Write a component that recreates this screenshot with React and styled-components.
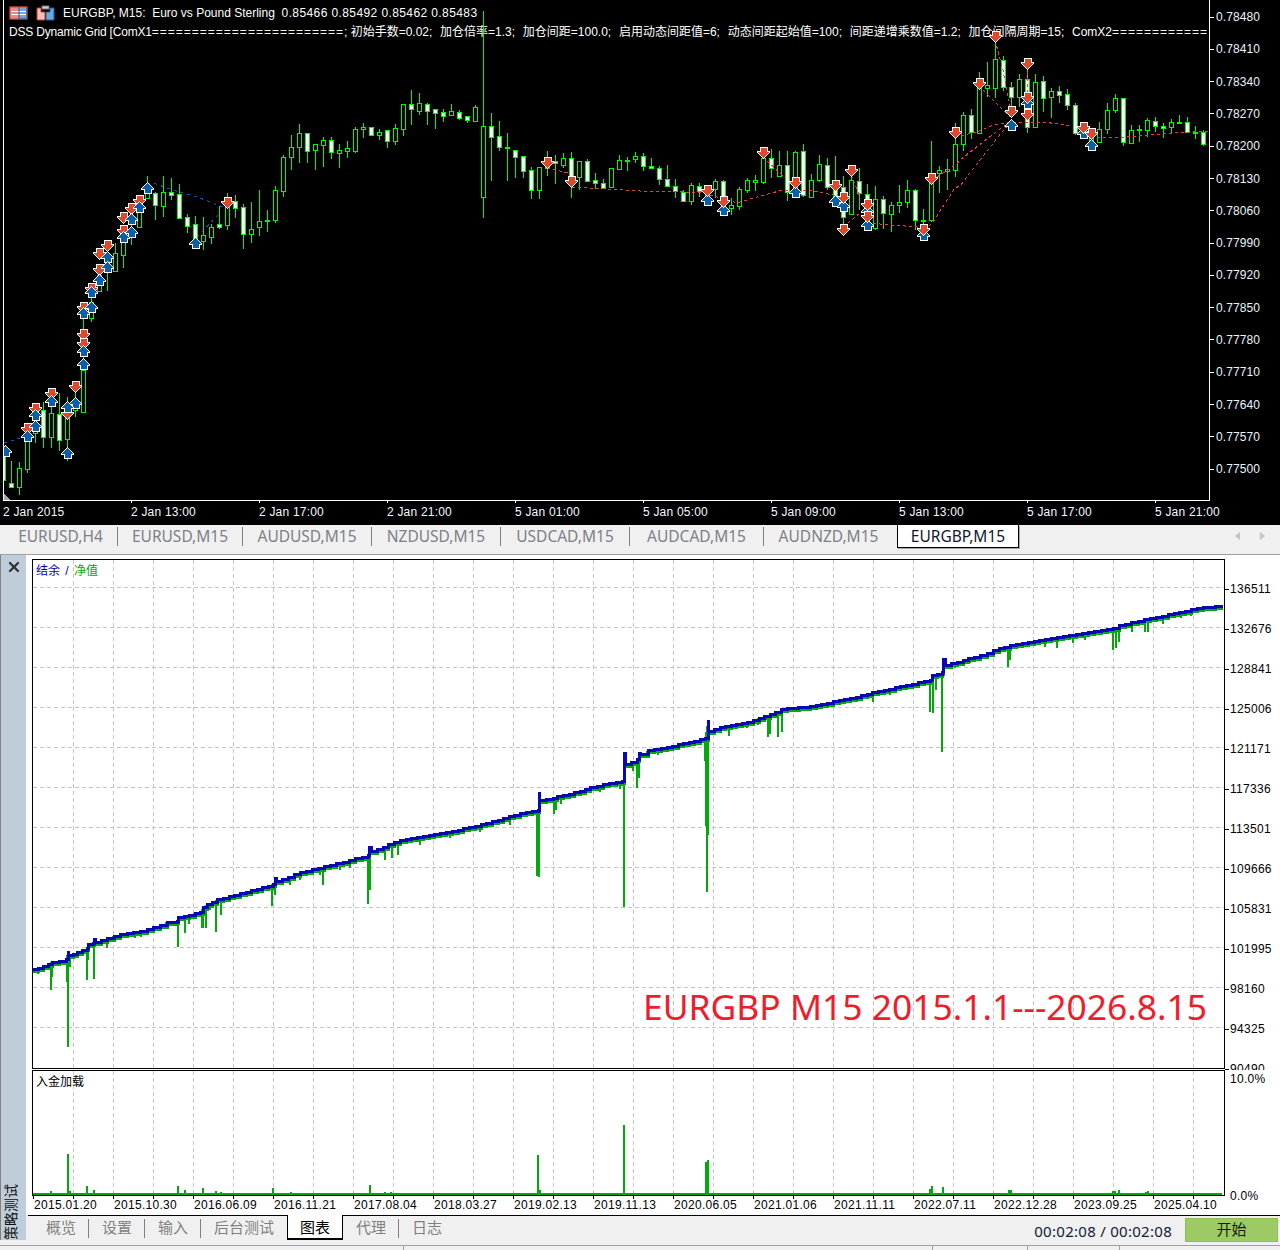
import React from "react";
import styled, { createGlobalStyle } from "styled-components";
import { X } from "lucide-react";

const Global = createGlobalStyle`
  html, body { margin: 0; padding: 0; background: #f0f0f0; overflow: hidden; }
  #root { width: 1280px; height: 1250px; overflow: hidden; }
  * { box-sizing: border-box; }
`;

const MONO = `"Liberation Sans", "Noto Sans CJK SC", sans-serif`;
const UI = `"Noto Sans", "Noto Sans CJK SC", sans-serif`;

/* ---------- layout ---------- */
const Page = styled.div`
  width: 1280px;
  height: 1250px;
  display: flex;
  flex-direction: column;
  overflow: hidden;
  background: #f0f0f0;
`;
const MarketChart = styled.section`
  flex: none;
  height: 525px;
  background: #000;
  color: #fff;
  font: 12px/14px ${MONO};
  display: grid;
  grid-template-columns: 1210px 70px;
  grid-template-rows: 501px 24px;
`;
const PlotFrame = styled.div`
  position: relative;
  margin-left: 3px;
  border: 1px solid #fff;
  border-top: none;
  overflow: hidden;
  & > svg { position: relative; z-index: 1; display: block; }
`;
const Legend = styled.div`
  position: absolute;
  left: 5px;
  top: 5px;
  white-space: pre;
`;
const LegendTitle = styled.div`
  display: flex;
  align-items: center;
  height: 16px;
  gap: 8px;
`;
const Quote = styled.span`
  letter-spacing: 0.4px;
`;
const LegendParams = styled.div`
  margin-top: 4px;
  height: 14px;
`;
const StrategyName = styled.span`
  letter-spacing: -0.2px;
`;
const EqRun = styled.span`
  letter-spacing: 1px;
`;
const ParamList = styled.span`
  word-spacing: 4.4px;
`;
const PriceAxis = styled.div`
  display: flex;
  flex-direction: column;
  padding-top: 1px;
  overflow: hidden;
`;
const PriceLabel = styled.div`
  flex: none;
  height: 32.29px;
  display: flex;
  align-items: center;
  gap: 2px;
  color: #e8f4ff;
  letter-spacing: 0.1px;
  &::before { content: ""; width: 4px; height: 1px; background: #fff; }
`;
const TimeAxis = styled.div`
  grid-column: 1 / 3;
  display: flex;
  padding-left: 3px;
`;
const TimeLabel = styled.div`
  flex: none;
  width: 128px;
  white-space: nowrap;
  padding-top: 4px;
  position: relative;
  color: #f4f8ff;
  letter-spacing: 0.2px;
  &::before {
    content: "";
    position: absolute;
    left: 0;
    top: -1px;
    width: 1px;
    height: 3px;
    background: ${(p) => (p.$first ? "transparent" : "#fff")};
  }
`;

/* ---------- symbol tabs ---------- */
const SymbolBar = styled.nav`
  flex: none;
  height: 30px;
  display: flex;
  align-items: flex-start;
  padding-left: 4px;
  background: #f0f0f0;
  border-bottom: 1px solid #a0a0a0;
  font: 15.5px/23px ${UI};
`;
const SymbolTab = styled.div`
  flex: none;
  width: ${(p) => p.$w}px;
  height: 23px;
  text-align: center;
  color: ${(p) => (p.$active ? "#101830" : "#7c8088")};
  ${(p) =>
    p.$active &&
    `background:#fff;border:1px solid #000;border-top:none;box-shadow:1px 1px 0 #a8a8a8;margin-left:4px;`}
`;
const TabDivider = styled.i`
  flex: none;
  width: 1px;
  height: ${(p) => p.$h}px;
  margin-top: ${(p) => p.$top}px;
  background: #808080;
`;
const ScrollArrows = styled.div`
  margin-left: auto;
  display: flex;
  gap: 20px;
  padding: 7px 15px 0 0;
`;
const ScrollArrow = styled.i`
  width: 0;
  height: 0;
  border-top: 4px solid transparent;
  border-bottom: 4px solid transparent;
  ${(p) => (p.$dir === "left" ? "border-right: 5px solid #c4c4c4;" : "border-left: 5px solid #c4c4c4;")}
`;

/* ---------- tester ---------- */
const Tester = styled.section`
  flex: none;
  height: 690px;
  display: grid;
  grid-template-columns: 26px 1fr;
`;
const SideStrip = styled.aside`
  height: 685px;
  background: #bfcddb;
  border-left: 1px solid #808080;
  display: flex;
  flex-direction: column;
  align-items: center;
  justify-content: space-between;
  padding: 4px 0 0 0;
  overflow: hidden;
`;
const CloseButton = styled.div`
  display: flex;
  color: #333;
  & svg { display: block; }
`;
const SideTitle = styled.div`
  writing-mode: vertical-rl;
  text-orientation: sideways;
  transform: rotate(180deg);
  font: 14px/16px ${MONO};
  color: #111;
  margin: 0 6px 0 0;
`;
const TesterMain = styled.div`
  display: flex;
  flex-direction: column;
  min-width: 0;
`;
const ChartsArea = styled.div`
  flex: none;
  height: 660px;
  background: #fff;
  color: #000;
  font: 12px/14px ${MONO};
  display: flex;
  flex-direction: column;
`;
const EquityRow = styled.div`
  flex: none;
  height: 515px;
  padding: 4px 0 0 6px;
  display: flex;
  overflow: hidden;
`;
const PlotBox = styled.div`
  position: relative;
  flex: none;
  width: 1193px;
  height: ${(p) => p.$h}px;
  border: 1px solid #000;
  ${(p) => p.$open && "border-bottom: none;"}
  & > svg { display: block; }
`;
const PaneTitle = styled.div`
  position: absolute;
  left: 3px;
  top: 4px;
  z-index: 1;
  word-spacing: 2px;
`;
const BalanceWord = styled.span`
  color: #0000c8;
`;
const EquityWord = styled.span`
  color: #00a800;
`;
const Annotation = styled.div`
  position: absolute;
  right: 17px;
  top: 422px;
  font: 35.4px/48px ${UI};
  color: #f01c2c;
  white-space: nowrap;
`;
const ValueAxis = styled.div`
  flex: 1;
  display: flex;
  flex-direction: column;
  padding-top: ${(p) => p.$pad || 0}px;
`;
const ValueLabel = styled.div`
  flex: none;
  height: 40px;
  display: flex;
  align-items: center;
  gap: 1px;
  letter-spacing: 0.3px;
  &::before { content: ""; width: 4px; height: 1px; background: #000; }
`;
const LoadRow = styled.div`
  flex: none;
  height: 125px;
  padding-left: 6px;
  display: flex;
`;
const LoadAxis = styled.div`
  flex: 1;
  display: flex;
  flex-direction: column;
  justify-content: space-between;
  padding: 2px 0 0 5px;
  margin-bottom: -8px;
  letter-spacing: 0.3px;
`;
const DateAxis = styled.div`
  flex: 1;
  display: flex;
  padding: 3px 0 0 8px;
  letter-spacing: 0.3px;
  background: repeating-linear-gradient(90deg, #000 0 1px, transparent 1px 40px) 7px 0 / 1192px 4px no-repeat;
`;
const DateLabel = styled.div`
  flex: none;
  width: 80px;
`;
const BottomBar = styled.div`
  flex: none;
  height: 30px;
  margin-left: 2px;
  border-top: 1px solid #000;
  display: flex;
  align-items: flex-start;
  padding-left: 5px;
  font: 15px/22px ${UI};
`;
const ViewTab = styled.div`
  flex: none;
  height: 24px;
  padding: ${(p) => (p.$active ? "0 12px" : "0 12px 0 13px")};
  color: ${(p) => (p.$active ? "#000" : "#808080")};
  ${(p) =>
    p.$active &&
    `background:#fff;border:1px solid #000;border-top:none;border-bottom-width:2px;margin:-1px 0 0 1px;height:25px;padding-top:1px;`}
`;
const Elapsed = styled.div`
  margin-left: auto;
  padding-top: 4px;
  color: #102040;
  white-space: nowrap;
  letter-spacing: 0.28px;
`;
const StartButton = styled.button`
  flex: none;
  width: 93px;
  height: 24px;
  margin: 2px 2px 0 13px;
  padding: 0 0 2px 0;
  background: #9ccb66;
  border: 1px solid #8dbe57;
  color: #1a1a10;
  font: 15px/20px ${UI};
`;
const Footer = styled.footer`
  flex: none;
  height: 5px;
  border-top: 1px solid #a0a0a0;
  display: grid;
  grid-template-columns: 404px 529px 95px 92px 1fr;
`;
const FooterCell = styled.div`
  border-right: 1px solid ${(p) => (p.$last ? "transparent" : "#a0a0a0")};
`;

/* ---------- market data: [high, low, bodyTop, bodyBottom, white] ---------- */
const CANDLES = [
  [440,480,449,480,1],[461,488,483,487,1],[462,495,468,487,0],[430,473,437,469,0],[420,443,428,433,0],
  [402,448,410,437,1],[400,448,413,437,0],[393,451,414,440,1],[397,461,413,439,0],[388,417,407,410,0],
  [302,412,370,412,0],[295,322,302,318,0],[264,291,275,291,0],[255,291,262,270,0],[243,272,253,271,0],
  [235,268,242,255,0],[224,245,228,236,0],[205,228,212,227,0],[176,198,192,198,0],[192,220,193,205,1],
  [176,217,192,206,0],[178,200,192,195,1],[184,218,194,218,1],[214,233,217,226,1],[216,241,224,239,1],
  [217,250,235,241,0],[224,244,227,237,0],[206,229,224,227,1],[193,230,207,225,0],[195,218,201,208,1],
  [204,249,207,234,1],[202,243,229,234,0],[190,236,221,227,0],[210,232,220,221,0],[186,223,190,220,0],
  [155,197,157,191,0],[135,170,147,157,0],[124,163,133,147,0],[133,163,133,151,1],[144,170,144,150,0],
  [137,167,140,145,0],[137,159,140,152,1],[144,168,150,153,0],[141,158,148,151,0],[127,153,129,151,0],
  [123,138,127,129,0],[127,135,127,135,1],[129,140,132,135,0],[130,148,130,141,1],[124,145,128,141,0],
  [104,136,104,129,0],[90,125,104,109,1],[93,115,103,111,0],[103,125,104,111,1],[109,129,109,113,1],
  [109,122,112,116,1],[104,116,111,115,0],[110,120,112,118,1],[116,123,116,120,1],[105,122,107,121,0],
  [11,218,126,197,0],[113,181,126,137,1],[121,151,136,147,1],[133,181,147,148,0],[150,178,150,157,1],
  [156,178,156,171,1],[167,199,170,190,1],[167,199,167,190,0],[151,176,160,168,0],[155,184,161,163,1],
  [153,168,158,165,0],[152,198,158,177,1],[161,190,161,177,0],[159,182,161,181,1],[173,189,180,183,1],
  [179,189,183,188,1],[168,188,168,187,0],[155,170,160,169,0],[157,171,160,161,0],[152,163,156,159,0],
  [153,171,156,166,1],[158,168,166,168,1],[166,185,168,179,1],[165,187,179,186,1],[179,198,186,191,1],
  [190,202,192,201,1],[183,205,185,201,0],[183,197,186,191,1],[185,203,188,196,1],[179,198,181,189,0],
  [180,213,181,198,1],[198,215,205,208,0],[187,210,189,206,0],[178,193,180,190,0],[175,191,180,182,0],
  [148,184,158,182,0],[149,178,158,168,1],[151,177,165,176,0],[151,201,165,192,1],[151,197,152,192,0],
  [144,197,151,195,1],[174,198,180,197,0],[155,182,164,180,0],[158,190,165,187,1],[156,200,184,198,1],
  [176,227,187,217,1],[168,215,180,214,0],[168,210,181,193,1],[184,230,194,207,1],[186,230,199,228,0],
  [196,229,199,213,1],[202,232,205,214,0],[185,213,202,205,0],[180,208,190,202,0],[189,230,190,220,1],
  [209,233,220,221,0],[141,222,173,220,0],[166,193,170,173,0],[159,190,169,171,0],[123,177,144,170,0],
  [112,151,115,144,0],[109,139,115,132,1],[72,134,87,133,0],[62,97,85,88,0],[37,98,59,88,0],
  [56,91,60,87,1],[82,117,87,97,1],[74,107,79,97,0],[68,133,79,127,1],[74,127,82,127,0],
  [76,112,81,98,1],[88,118,91,97,0],[86,103,91,95,1],[89,110,94,105,1],[103,135,105,133,1],
  [125,137,128,134,1],[128,150,138,143,0],[122,143,129,142,0],[103,134,110,129,0],[94,113,98,110,0],
  [98,146,98,142,1],[125,144,130,143,0],[125,142,129,130,0],[118,137,120,130,0],[117,132,121,126,1],
  [123,138,126,128,1],[119,133,122,127,0],[115,123,122,123,1],[117,133,122,132,1],[126,139,132,133,0],
  [130,146,132,144,1],
];
const SELLS = [
  [227,202],[139,200],[131,208],[123,217],[123,230],[107,245],[99,253],[99,269],[91,288],[83,307],[83,334],[83,343],
  [75,386],[51,393],[35,408],[27,428],[67,413],
  [547,162],[571,181],[707,190],[723,201],[763,152],[795,182],[835,185],[843,197],[851,170],[867,204],[867,216],
  [843,229],[923,229],[931,178],[955,132],[979,83],[995,36],[1011,111],[1027,63],[1027,97],[1027,114],[1083,127],[1091,133],
];
const BUYS = [
  [147,188],[139,207],[131,219],[131,232],[123,237],[107,257],[195,243],[107,267],[99,280],[91,292],[91,307],[83,313],
  [83,351],[83,364],[75,403],[67,407],[51,401],[35,415],[35,426],[27,436],[67,453],[5,451],
  [707,200],[723,210],[795,192],[835,201],[843,206],[867,211],[867,225],[923,235],[1011,125],[1027,103],[1083,133],[1091,145],
];
const RED_TRAILS = [
  "547,168 568,173", "572,187 640,191 683,192 703,193 737,203 757,197 783,190 807,190 833,195 842,199",
  "763,157 783,176", "851,175 860,197", "843,227 860,213", "867,223 917,227 923,232 933,222 955,188 960,186 980,160 1002,132 1010,123",
  "931,178 937,177 957,164 960,160 992,135 1010,122", "955,137 977,132 993,125 1010,122 1043,122 1073,126",
  "979,86 993,100 1010,117", "995,40 1003,70 1010,110", "1027,66 1027,112", "1097,138 1127,137 1173,133 1209,131",
];
const BLUE_TRAILS = ["147,183 153,183 173,190 200,198 223,207", "197,237 220,213", "4,443 20,438"];

/* pixel rows of a trade arrow, from its flat end to its point */
const OUTLINE_ROWS = [8, 8, 8, 8, 13, 13, 11, 9, 7, 5, 3, 1];
const FILL_ROWS = [0, 6, 6, 6, 6, 11, 9, 7, 5, 3, 1, 0];
const rowsPath = (rows, up) =>
  rows
    .map((w, i) => (w ? `M${-Math.floor((w - 1) / 2)} ${up ? 5 - i : i - 5}h${w}v1h${-w}z` : ""))
    .join("");

const Candle = ({ k, d }) => {
  const x = 3 + 8 * k;
  const [hi, lo, top, bot, white] = d;
  const h = Math.max(bot - top, 1);
  return (
    <g>
      <rect x={x} y={hi} width="1" height={lo - hi} fill="#00f800" />
      <rect x={x - 1.5} y={top + 0.5} width="4" height={h} fill={white ? "#fff" : "#000"} stroke="#00f800" />
    </g>
  );
};
const Arrow = ({ p, up, fill }) => (
  <g transform={`translate(${p[0]} ${p[1]})`}>
    <path d={rowsPath(OUTLINE_ROWS, up)} fill="#fff" />
    <path d={rowsPath(FILL_ROWS, up)} fill={fill} />
  </g>
);

const MarketPlot = () => (
  <svg width="1205" height="500" viewBox="4 0 1205 500" shapeRendering="crispEdges">
    {BLUE_TRAILS.map((pts) => (
      <polyline key={pts} points={pts} fill="none" stroke="#0f5aa8" strokeDasharray="3 4" />
    ))}
    {CANDLES.map((d, k) => (
      <Candle key={k} k={k} d={d} />
    ))}
    {RED_TRAILS.map((pts) => (
      <polyline key={pts} points={pts} fill="none" stroke="#e8432a" strokeDasharray="3 3" />
    ))}
    {BUYS.filter((p) => p[0] >= 300).map((p) => (
      <Arrow key={p.join()} p={p} up fill="#0a5fa8" />
    ))}
    {SELLS.map((p) => (
      <Arrow key={p.join()} p={p} fill="#e0482a" />
    ))}
    {BUYS.filter((p) => p[0] < 300).map((p) => (
      <Arrow key={p.join()} p={p} up fill="#0a5fa8" />
    ))}
    <polygon points="4,494 10,500 4,500" fill="#a0a8b4" />
  </svg>
);

const TableIcon = () => (
  <svg width="19" height="14" viewBox="0 0 19 14">
    <rect x="1" y="1" width="17" height="12" fill="#fff" stroke="#c63a30" strokeWidth="1.5" />
    <rect x="2" y="2" width="8" height="10" fill="#ee8a80" />
    <rect x="10" y="2" width="7" height="10" fill="#6ca8dc" />
    <path d="M2 5.5h15M2 8.5h15" stroke="#fff" />
    <path d="M10 1v12M18 1v12M10 13h8" stroke="#1a5f9f" />
  </svg>
);
const ChartIcon = () => (
  <svg width="19" height="16" viewBox="0 0 19 16">
    <path d="M1 3h4v4h4v8H1z" fill="#f4c0b8" stroke="#c63a30" />
    <path d="M18 3h-4v4h-4v8h8z" fill="#6ca8dc" stroke="#1a5f9f" />
    <rect x="6" y="1" width="7" height="3" fill="#d0d0d0" stroke="#777" />
  </svg>
);

/* ---------- equity data ---------- */
const BALANCE = [
  [33,969],[43,966],[52,962],[66,959],[68,951],[68,955],[77,952],[87,948],[88,944],[93,943],[94,939],[95,942],[107,938],[120,934],
  [140,931],[160,925],[167,922],[177,921],[178,917],[200,912],[203,907],[207,904],[217,899],[240,893],[273,884],[275,878],[276,881],
  [300,872],[330,865],[368,855],[369,847],[371,851],[400,840],[440,833],[475,826],[520,813],[538,810],[539,792],[539,800],[553,798],
  [557,796],[580,791],[590,787],[603,784],[622,781],[624,753],[625,764],[637,759],[639,753],[640,754],[648,750],[667,747],[683,743],
  [705,738],[708,720],[708,731],[720,727],[747,722],[753,720],[775,712],[781,709],[810,706],[850,698],[878,691],[900,686],[930,680],
  [932,675],[942,672],[943,659],[945,665],[980,655],[993,650],[1010,645],[1057,637],[1113,628],[1119,625],[1150,618],[1197,608],[1221,605],
];
const DRAWDOWNS = [
  [38,974],[51,990],[52,977],[67,982],[68,1047],[70,967],[77,956],[87,980],[88,960],[94,979],[98,945],[107,948],[113,940],[118,938],
  [128,937],[135,938],[141,937],[147,935],[163,929],[166,928],[178,947],[185,933],[189,924],[194,917],[202,928],[203,928],[206,928],
  [210,910],[216,932],[221,915],[240,897],[272,906],[275,895],[290,885],[300,880],[320,875],[323,885],[340,870],[350,868],[368,904],
  [370,890],[385,860],[392,858],[398,855],[420,845],[450,838],[480,832],[510,825],[537,876],[539,877],[554,814],[556,810],[561,804],
  [583,793],[600,792],[620,789],[624,907],[627,767],[633,771],[637,788],[639,778],[647,755],[658,755],[666,750],[674,749],[679,749],
  [688,747],[705,761],[706,826],[707,892],[708,835],[729,736],[747,728],[758,725],[768,737],[770,734],[778,737],[782,732],[800,712],
  [820,708],[838,705],[850,703],[873,702],[890,695],[930,712],[933,713],[936,690],[942,752],[955,668],[970,663],[1008,667],[1010,660],
  [1045,647],[1057,648],[1073,643],[1085,640],[1113,650],[1116,648],[1119,642],[1132,632],[1145,632],[1148,632],[1163,624],[1181,618],[1191,616],[1205,610],
];
const LOADS = [
  [38,1193],[51,1191],[68,1154],[70,1191],[87,1186],[94,1190],[107,1193],[141,1193],[147,1193],[163,1193],[178,1186],[185,1190],[189,1193],
  [203,1188],[210,1193],[216,1191],[221,1192],[243,1193],[253,1193],[273,1188],[283,1193],[291,1192],[303,1193],[323,1193],[332,1193],[351,1193],
  [370,1185],[385,1192],[391,1192],[398,1193],[421,1193],[474,1193],[538,1155],[540,1190],[624,1125],[706,1162],[708,1160],[932,1186],[930,1189],[943,1187],
  [955,1193],[989,1193],[1009,1190],[1011,1190],[1056,1193],[1113,1191],[1115,1191],[1119,1190],[1132,1193],[1146,1192],[1148,1191],
];

const stairs = (pts, stepX = 6) => {
  let d = `M${pts[0][0]} ${pts[0][1]}`;
  for (let i = 1; i < pts.length; i++) {
    const [x0, y0] = pts[i - 1];
    const [x1, y1] = pts[i];
    const n = Math.max(1, Math.round((x1 - x0) / stepX));
    for (let s = 1; s <= n; s++) {
      const x = Math.round(x0 + ((x1 - x0) * s) / n);
      const y = Math.round(y0 + ((y1 - y0) * s) / n);
      d += `H${x}V${y}`;
    }
  }
  return d;
};
const balanceAt = (x) => {
  for (let i = 1; i < BALANCE.length; i++) {
    const [x0, y0] = BALANCE[i - 1];
    const [x1, y1] = BALANCE[i];
    if (x <= x1) return x1 === x0 ? y1 : y0 + ((y1 - y0) * (x - x0)) / (x1 - x0);
  }
  return BALANCE[BALANCE.length - 1][1];
};

const range = (n, f) => Array.from({ length: n }, (_, i) => f(i));
const GridLines = ({ y0, y1, rows }) => (
  <g stroke="#c4c4c4" strokeDasharray="4 3">
    {range(29, (i) => (
      <line key={i} x1={73.5 + i * 40} x2={73.5 + i * 40} y1={y0} y2={y1} />
    ))}
    {rows.map((y) => (
      <line key={y} x1="33" x2="1224" y1={y + 0.5} y2={y + 0.5} />
    ))}
  </g>
);

const EquityPlot = () => {
  const line = stairs(BALANCE);
  return (
    <svg width="1191" height="508" viewBox="33 560 1191 508" shapeRendering="crispEdges">
      <GridLines y0={560} y1={1068} rows={range(12, (i) => 587 + i * 40)} />
      <path d={line} transform="translate(0 2)" fill="none" stroke="#00aa0a" strokeWidth="3" />
      {DRAWDOWNS.map(([x, y]) => {
        const t = Math.round(balanceAt(x));
        return <rect key={`${x}${y}`} x={x - 1} y={t} width="2" height={Math.max(y - t, 1)} fill="#00aa0a" />;
      })}
      <path d={line} fill="none" stroke="#0808b4" strokeWidth="3" />
    </svg>
  );
};
const LoadPlot = () => (
  <svg width="1191" height="125" viewBox="33 1071 1191 125" shapeRendering="crispEdges">
    <GridLines y0={1071} y1={1193} rows={[]} />
    {LOADS.map(([x, y]) => (
      <rect key={x} x={x - 1} y={y} width="2" height={1195 - y} fill="#00aa0a" />
    ))}
    <rect x="33" y="1193" width="1189" height="2" fill="#00aa0a" />
    <rect x="33" y="1195" width="1191" height="1" fill="#000" />
  </svg>
);

const PRICES = ["0.78480","0.78410","0.78340","0.78270","0.78200","0.78130","0.78060","0.77990","0.77920","0.77850","0.77780","0.77710","0.77640","0.77570","0.77500"];
const TIMES = ["2 Jan 2015","2 Jan 13:00","2 Jan 17:00","2 Jan 21:00","5 Jan 01:00","5 Jan 05:00","5 Jan 09:00","5 Jan 13:00","5 Jan 17:00","5 Jan 21:00"];
const SYMBOLS = [["EURUSD,H4",113],["EURUSD,M15",124],["AUDUSD,M15",128],["NZDUSD,M15",128],["USDCAD,M15",128],["AUDCAD,M15",133],["AUDNZD,M15",129]];
const VALUES = ["136511","132676","128841","125006","121171","117336","113501","109666","105831","101995","98160","94325","90490"];
const DATES = ["2015.01.20","2015.10.30","2016.06.09","2016.11.21","2017.08.04","2018.03.27","2019.02.13","2019.11.13","2020.06.05","2021.01.06","2021.11.11","2022.07.11","2022.12.28","2023.09.25","2025.04.10"];

export default function App() {
  return (
    <Page>
      <Global />
      <MarketChart>
        <PlotFrame>
          <Legend>
            <LegendTitle>
              <TableIcon />
              <ChartIcon />
              <span>EURGBP, M15:  Euro vs Pound Sterling  <Quote>0.85466 0.85492 0.85462 0.85483</Quote></span>
            </LegendTitle>
            <LegendParams>
              <StrategyName>DSS Dynamic Grid [ComX1</StrategyName>
              <EqRun>{"=".repeat(24)}</EqRun>
              {"; "}
              <ParamList>初始手数=0.02; 加仓倍率=1.3; 加仓间距=100.0; 启用动态间距值=6; 动态间距起始值=100; 间距递增乘数值=1.2; 加仓间隔周期=15; </ParamList>
              ComX2<EqRun>{"=".repeat(12)}</EqRun>
            </LegendParams>
          </Legend>
          <MarketPlot />
        </PlotFrame>
        <PriceAxis>
          {PRICES.map((p) => (
            <PriceLabel key={p}>{p}</PriceLabel>
          ))}
        </PriceAxis>
        <TimeAxis>
          {TIMES.map((t, i) => (
            <TimeLabel key={t} $first={i === 0}>{t}</TimeLabel>
          ))}
        </TimeAxis>
      </MarketChart>

      <SymbolBar>
        {SYMBOLS.map(([s, w], i) => (
          <React.Fragment key={s}>
            <SymbolTab $w={w}>{s}</SymbolTab>
            {i < SYMBOLS.length - 1 && <TabDivider $h={19} $top={2} />}
          </React.Fragment>
        ))}
        <SymbolTab $active $w={122}>EURGBP,M15</SymbolTab>
        <ScrollArrows>
          <ScrollArrow $dir="left" />
          <ScrollArrow $dir="right" />
        </ScrollArrows>
      </SymbolBar>

      <Tester>
        <SideStrip>
          <CloseButton><X size={16} strokeWidth={3.5} /></CloseButton>
          <SideTitle>策略测试</SideTitle>
        </SideStrip>
        <TesterMain>
          <ChartsArea>
            <EquityRow>
              <PlotBox $h={510}>
                <PaneTitle>
                  <BalanceWord>结余 / </BalanceWord>
                  <EquityWord>净值</EquityWord>
                </PaneTitle>
                <EquityPlot />
                <Annotation>EURGBP M15 2015.1.1---2026.8.15</Annotation>
              </PlotBox>
              <ValueAxis $pad={10}>
                {VALUES.map((v) => (
                  <ValueLabel key={v}>{v}</ValueLabel>
                ))}
              </ValueAxis>
            </EquityRow>
            <LoadRow>
              <PlotBox $h={126} $open>
                <PaneTitle>入金加载</PaneTitle>
                <LoadPlot />
              </PlotBox>
              <LoadAxis>
                <span>10.0%</span>
                <span>0.0%</span>
              </LoadAxis>
            </LoadRow>
            <DateAxis>
              {DATES.map((d) => (
                <DateLabel key={d}>{d}</DateLabel>
              ))}
            </DateAxis>
          </ChartsArea>
          <BottomBar>
            <ViewTab>概览</ViewTab>
            <TabDivider $h={19} $top={3} />
            <ViewTab>设置</ViewTab>
            <TabDivider $h={19} $top={3} />
            <ViewTab>输入</ViewTab>
            <TabDivider $h={19} $top={3} />
            <ViewTab>后台测试</ViewTab>
            <ViewTab $active>图表</ViewTab>
            <ViewTab>代理</ViewTab>
            <TabDivider $h={19} $top={3} />
            <ViewTab>日志</ViewTab>
            <Elapsed>00:02:08 / 00:02:08</Elapsed>
            <StartButton>开始</StartButton>
          </BottomBar>
        </TesterMain>
      </Tester>
      <Footer>
        <FooterCell />
        <FooterCell />
        <FooterCell />
        <FooterCell />
        <FooterCell $last />
      </Footer>
    </Page>
  );
}
